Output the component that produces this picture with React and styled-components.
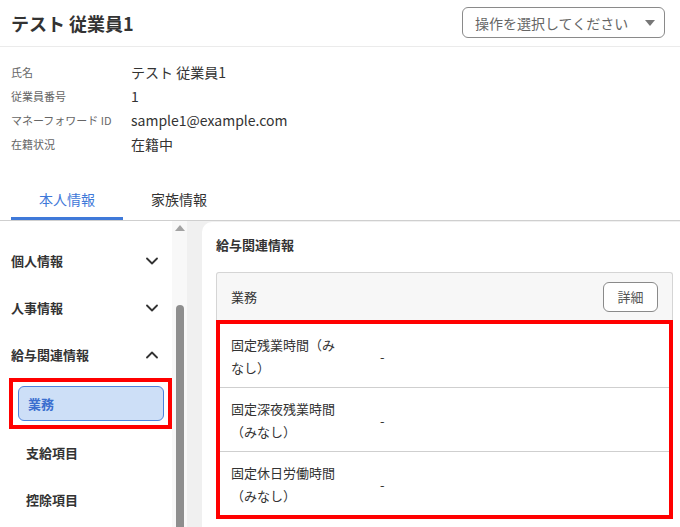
import React from "react";
import styled, { createGlobalStyle } from "styled-components";

const GlobalStyle = createGlobalStyle`
  html, body {
    margin: 0;
    height: 100%;
    overflow: hidden;
  }
  body {
    font-family: "Noto Sans CJK JP", "Noto Sans", sans-serif;
    color: #333;
    background: #fff;
  }
  #root {
    height: 100%;
  }
  * {
    box-sizing: border-box;
  }
`;

const Page = styled.div`
  display: flex;
  flex-direction: column;
  height: 100%;
`;

const Header = styled.header`
  display: flex;
  align-items: center;
  justify-content: space-between;
  height: 47px;
  padding: 0 15px 1px 11px;
  border-bottom: 1px solid #ebebeb;
`;

const Title = styled.h1`
  margin: 0;
  font-size: 18px;
  font-weight: 700;
  color: #333;
`;

const ActionSelect = styled.button`
  display: flex;
  align-items: center;
  justify-content: space-between;
  width: 203px;
  height: 31px;
  padding: 0 9px 0 12px;
  background: #fff;
  border: 1px solid #8a8a8a;
  border-radius: 6px;
  font-family: inherit;
  font-size: 14px;
  color: #666;
`;

const Caret = styled.span`
  width: 0;
  height: 0;
  border-left: 5px solid transparent;
  border-right: 5px solid transparent;
  border-top: 6px solid #777;
`;

const InfoList = styled.dl`
  display: grid;
  grid-template-columns: 120px 1fr;
  grid-auto-rows: 24px;
  align-items: center;
  margin: 0;
  padding: 13px 0 0 11px;
`;

const InfoLabel = styled.dt`
  font-size: 11px;
  color: #666;
`;

const InfoValue = styled.dd`
  margin: 0;
  font-size: 14px;
  color: #333;
`;

const Tabs = styled.nav`
  display: flex;
  margin-top: 25px;
  padding-left: 11px;
  border-bottom: 1px solid #cfcfcf;
`;

const Tab = styled.div`
  display: flex;
  align-items: center;
  justify-content: center;
  width: 112px;
  height: 39px;
  font-size: 14px;
  color: ${p => (p.$active ? "#3f79d9" : "#333")};
  border-bottom: 3px solid ${p => (p.$active ? "#3f79d9" : "transparent")};
`;

const Body = styled.div`
  display: flex;
  flex: 1;
  min-height: 0;
  overflow: hidden;
`;

const Sidebar = styled.aside`
  width: 172px;
  padding-top: 16px;
`;

const NavItem = styled.div`
  display: flex;
  align-items: center;
  justify-content: space-between;
  height: 47px;
  padding: 0 14px 0 11px;
  font-size: 13px;
  font-weight: 700;
  color: #333;
`;

const SubItem = styled.div`
  display: flex;
  align-items: center;
  height: 47px;
  padding-left: 26px;
  font-size: 13px;
  font-weight: 700;
  color: #333;
`;

const Highlight = styled.div`
  border: 4px solid #ff0000;
`;

const SideHighlight = styled(Highlight)`
  margin-left: 9px;
  padding: 4px 4px 4px 5px;
`;

const SelectedItem = styled.div`
  display: flex;
  align-items: center;
  height: 35px;
  padding-left: 9px;
  background: #cddff7;
  border: 1px solid #4c82dc;
  border-radius: 6px;
  font-size: 13px;
  font-weight: 700;
  color: #3b6fcf;
`;

const ScrollTrack = styled.div`
  display: flex;
  flex-direction: column;
  align-items: center;
  width: 15px;
  background: #f8f8f8;
`;

const ScrollArrow = styled.span`
  margin-top: 4px;
  width: 0;
  height: 0;
  border-left: 5px solid transparent;
  border-right: 5px solid transparent;
  border-bottom: 6px solid #a3a3a3;
`;

const ScrollThumb = styled.span`
  flex: 1;
  width: 8px;
  margin-top: 74px;
  background: #8e8e8e;
  border-radius: 4px 4px 0 0;
`;

const Main = styled.main`
  flex: 1;
  padding: 1px 0 0 15px;
  background: #f0f0f0;
`;

const Card = styled.section`
  height: 100%;
  padding: 13px 7px 0 14px;
  background: #fff;
  border-top-left-radius: 10px;
`;

const PanelTitle = styled.h2`
  margin: 0;
  font-size: 13px;
  line-height: 20px;
  font-weight: 700;
  color: #333;
`;

const Table = styled.div`
  margin-top: 17px;
`;

const TableHead = styled.div`
  display: flex;
  align-items: center;
  justify-content: space-between;
  height: 48px;
  padding: 0 14px;
  background: #f7f7f7;
  border: 1px solid #d5d5d5;
  border-bottom: none;
  border-radius: 3px 3px 0 0;
  font-size: 13px;
  color: #333;
`;

const DetailButton = styled.button`
  width: 55px;
  height: 30px;
  background: #fff;
  border: 1px solid #8a8a8a;
  border-radius: 6px;
  font-family: inherit;
  font-size: 13px;
  color: #555;
`;

const Row = styled.div`
  display: flex;
  align-items: center;
  padding: 9px 0 8px;
  & + & {
    border-top: 1px solid #cfcfcf;
  }
`;

const RowLabel = styled.div`
  width: 121px;
  padding-left: 11px;
  font-size: 13px;
  line-height: 23px;
  color: #333;
`;

const RowValue = styled.div`
  padding-left: 39px;
  font-size: 13px;
  color: #333;
`;

const Chevron = ({ up }) => (
  <svg width="12" height="8" viewBox="0 0 12 8" fill="none">
    <polyline
      points={up ? "1,6.5 6,1.5 11,6.5" : "1,1.5 6,6.5 11,1.5"}
      stroke="#333"
      strokeWidth="1.8"
      strokeLinecap="round"
      strokeLinejoin="round"
    />
  </svg>
);

const profile = [
  ["氏名", "テスト 従業員1"],
  ["従業員番号", "1"],
  ["マネーフォワード ID", "sample1@example.com"],
  ["在籍状況", "在籍中"],
];

const workRows = [
  ["固定残業時間（みなし）", "-"],
  ["固定深夜残業時間（みなし）", "-"],
  ["固定休日労働時間（みなし）", "-"],
];

export default function App() {
  return (
    <>
      <GlobalStyle />
      <Page>
        <Header>
          <Title>テスト 従業員1</Title>
          <ActionSelect type="button">
            操作を選択してください
            <Caret />
          </ActionSelect>
        </Header>

        <InfoList>
          {profile.map(([label, value]) => (
            <React.Fragment key={label}>
              <InfoLabel>{label}</InfoLabel>
              <InfoValue>{value}</InfoValue>
            </React.Fragment>
          ))}
        </InfoList>

        <Tabs>
          <Tab $active>本人情報</Tab>
          <Tab>家族情報</Tab>
        </Tabs>

        <Body>
          <Sidebar>
            <NavItem>
              個人情報
              <Chevron />
            </NavItem>
            <NavItem>
              人事情報
              <Chevron />
            </NavItem>
            <NavItem>
              給与関連情報
              <Chevron up />
            </NavItem>
            <SideHighlight>
              <SelectedItem>業務</SelectedItem>
            </SideHighlight>
            <SubItem>支給項目</SubItem>
            <SubItem>控除項目</SubItem>
          </Sidebar>
          <ScrollTrack>
            <ScrollArrow />
            <ScrollThumb />
          </ScrollTrack>
          <Main>
            <Card>
              <PanelTitle>給与関連情報</PanelTitle>
              <Table>
                <TableHead>
                  業務
                  <DetailButton type="button">詳細</DetailButton>
                </TableHead>
                <Highlight>
                  {workRows.map(([label, value]) => (
                    <Row key={label}>
                      <RowLabel>{label}</RowLabel>
                      <RowValue>{value}</RowValue>
                    </Row>
                  ))}
                </Highlight>
              </Table>
            </Card>
          </Main>
        </Body>
      </Page>
    </>
  );
}
